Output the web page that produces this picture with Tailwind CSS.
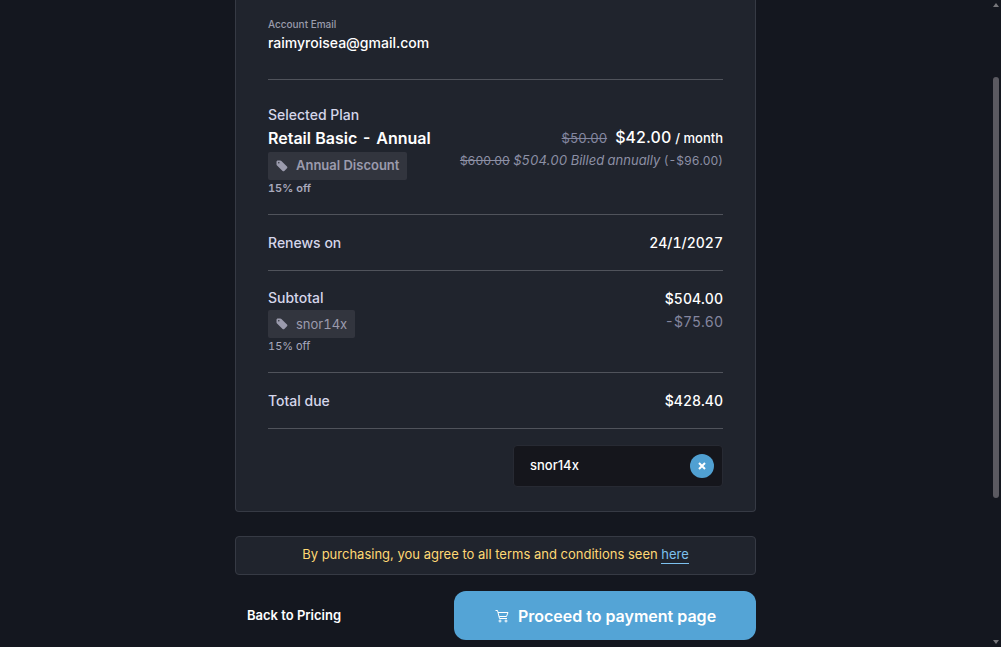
<!DOCTYPE html>
<html lang="en">
<head>
    <meta charset="UTF-8">
    <meta name="viewport" content="width=device-width, initial-scale=1.0">
    <title>Checkout</title>
    <script src="https://cdn.jsdelivr.net/npm/@tailwindcss/browser@4"></script>
</head>
<body class="bg-[#14171f] font-['Inter',sans-serif] text-white overflow-hidden">
    <div class="flex min-h-screen">
        <main class="flex-1">
            <div class="max-w-[521px] mx-auto pb-[7px]">
                <!-- Order summary -->
                <section class="bg-[#20242d] border border-t-0 border-[#363a44] rounded-b px-8 pb-6">
                    <div class="pt-4 pb-[26px] border-b border-[#50535b]">
                        <p class="text-[10px] leading-4 font-medium text-[#9a9bab]">Account Email</p>
                        <p class="text-sm leading-[21px] font-medium">raimyroisea@gmail.com</p>
                    </div>

                    <div class="flex justify-between pt-6 pb-[18px] border-b border-[#50535b]">
                        <div>
                            <p class="text-sm leading-[22px] font-medium text-[#d5d6ea]">Selected Plan</p>
                            <h2 class="text-base leading-6 font-semibold tabular-nums">Retail Basic - Annual</h2>
                            <div class="flex w-fit items-center gap-2 h-7 mt-0.5 px-2 rounded-xs bg-[#32353e] text-[13px] font-semibold text-[#9b9bad]">
                                <svg class="w-3 h-3" viewBox="0 0 12 12" fill="currentColor"><path fill-rule="evenodd" d="M.5 1.800v2.400c0 .5.200.9.500 1.200l5.600 5.500c.5.5 1.200.5 1.700 0l2.700-2.700c.5-.5.5-1.200 0-1.700L5.400 1c-.300-.3-.7-.5-1.200-.5H1.800C1.100.5.5 1.100.5 1.800zM2.800 2a.8.8 0 1 1 0 1.600.8.8 0 0 1 0-1.600z"/></svg>
                                Annual Discount
                            </div>
                            <p class="text-[11px] leading-4 font-semibold text-[#a9aabd] tabular-nums">15% off</p>
                        </div>
                        <div class="pt-[22px] text-right">
                            <p class="flex items-baseline justify-end h-[23px] text-[13px] leading-[23px] font-medium"><s class="font-normal text-[#8487a0] mr-2 tabular-nums">$50.00</s><span class="text-base leading-[23px] tabular-nums mr-1">$42.00</span> / month</p>
                            <p class="text-[13px] leading-[23px] text-[#8d90a5] tabular-nums"><s class="text-xs leading-[23px]">$600.00</s> <i>$504.00 Billed annually</i> <span class="text-xs leading-[23px]">(-$96.00)</span></p>
                        </div>
                    </div>

                    <div class="flex justify-between py-4 border-b border-[#50535b] text-sm leading-[23px] font-medium">
                        <span class="text-[#d5d6ea]">Renews on</span>
                        <span class="tabular-nums">24/1/2027</span>
                    </div>

                    <div class="flex justify-between pt-4 pb-[18px] border-b border-[#50535b] text-sm leading-[23px]">
                        <div>
                            <p class="leading-[22px] font-medium text-[#d5d6ea]">Subtotal</p>
                            <div class="flex w-fit items-center gap-2 h-7 mt-px px-2 rounded-xs bg-[#32353e] text-[13px] text-[#9b9bad] tabular-nums">
                                <svg class="w-3 h-3" viewBox="0 0 12 12" fill="currentColor"><path fill-rule="evenodd" d="M.5 1.800v2.400c0 .5.200.9.500 1.200l5.600 5.500c.5.5 1.200.5 1.700 0l2.700-2.700c.5-.5.5-1.200 0-1.700L5.400 1c-.300-.3-.7-.5-1.200-.5H1.800C1.100.5.5 1.100.5 1.800zM2.800 2a.8.8 0 1 1 0 1.600.8.8 0 0 1 0-1.600z"/></svg>
                                snor14x
                            </div>
                            <p class="text-[11px] leading-4 text-[#a9aabd] tabular-nums">15% off</p>
                        </div>
                        <div class="text-right tabular-nums">
                            <p class="font-medium">$504.00</p>
                            <p class="text-[#84869f]">-$75.60</p>
                        </div>
                    </div>

                    <div class="flex justify-between py-4 border-b border-[#50535b] text-sm leading-[23px] font-medium">
                        <span class="text-[#d5d6ea]">Total due</span>
                        <span class="tabular-nums">$428.40</span>
                    </div>

                    <form class="flex justify-end pt-4">
                        <div class="flex items-center w-[210px] h-[42px] pl-4 pr-2 rounded bg-[#15161c] border border-[#272a33]">
                            <input id="code" type="text" value="snor14x" aria-label="Discount code" class="flex-1 min-w-0 bg-transparent text-[13px] font-medium outline-none">
                            <button type="button" aria-label="Remove code" class="flex items-center justify-center w-6 h-6 rounded-full bg-[#50a0d2]">
                                <svg class="w-2 h-2" viewBox="0 0 8 8" stroke="#fff" stroke-width="2"><path d="M1 1l6 6M7 1L1 7"/></svg>
                            </button>
                        </div>
                    </form>
                </section>

                <p class="mt-6 pt-[7px] pb-[9px] bg-[#20242d] border border-[#363a44] rounded text-center text-[13px] leading-[21px] text-[#ffd874]">
                    By purchasing, you agree to all terms and conditions seen <a href="#" class="inline-block leading-[18px] text-[#7cc0ee] border-b border-[#7cc0ee]">here</a>
                </p>

                <div class="flex items-center justify-between mt-4">
                    <a href="#" class="px-3 text-[13px] font-semibold">Back to Pricing</a>
                    <button type="button" class="flex items-center justify-center gap-2 w-[302px] h-[49px] rounded-xl bg-[#54a4d6] text-base font-semibold">
                        <svg class="w-4 h-4" viewBox="0 0 16 16" fill="none" stroke="currentColor" stroke-width="1"><path d="M1.500 2.500H3.500L5.500 10.500H13M4 4.500H14L12.500 8.500H5.200"/><circle cx="6" cy="13" r="1"/><circle cx="12" cy="13" r="1"/></svg>
                        Proceed to payment page
                    </button>
                </div>
            </div>
        </main>

        <!-- Scrollbar -->
        <div class="flex flex-col items-center justify-between w-[10px] py-[3px]">
            <svg class="w-[6px] h-1" viewBox="0 0 6 4" fill="#77777b"><path d="M0 4L3 0L6 4z"/></svg>
            <div class="flex-1 w-full pt-[70px] pl-[2px]">
                <div class="w-[6px] h-[421px] rounded-full bg-[#5b5a61]"></div>
            </div>
            <svg class="w-[6px] h-1" viewBox="0 0 6 4" fill="#77777b"><path d="M0 0H6L3 4z"/></svg>
        </div>
    </div>
</body>
</html>
